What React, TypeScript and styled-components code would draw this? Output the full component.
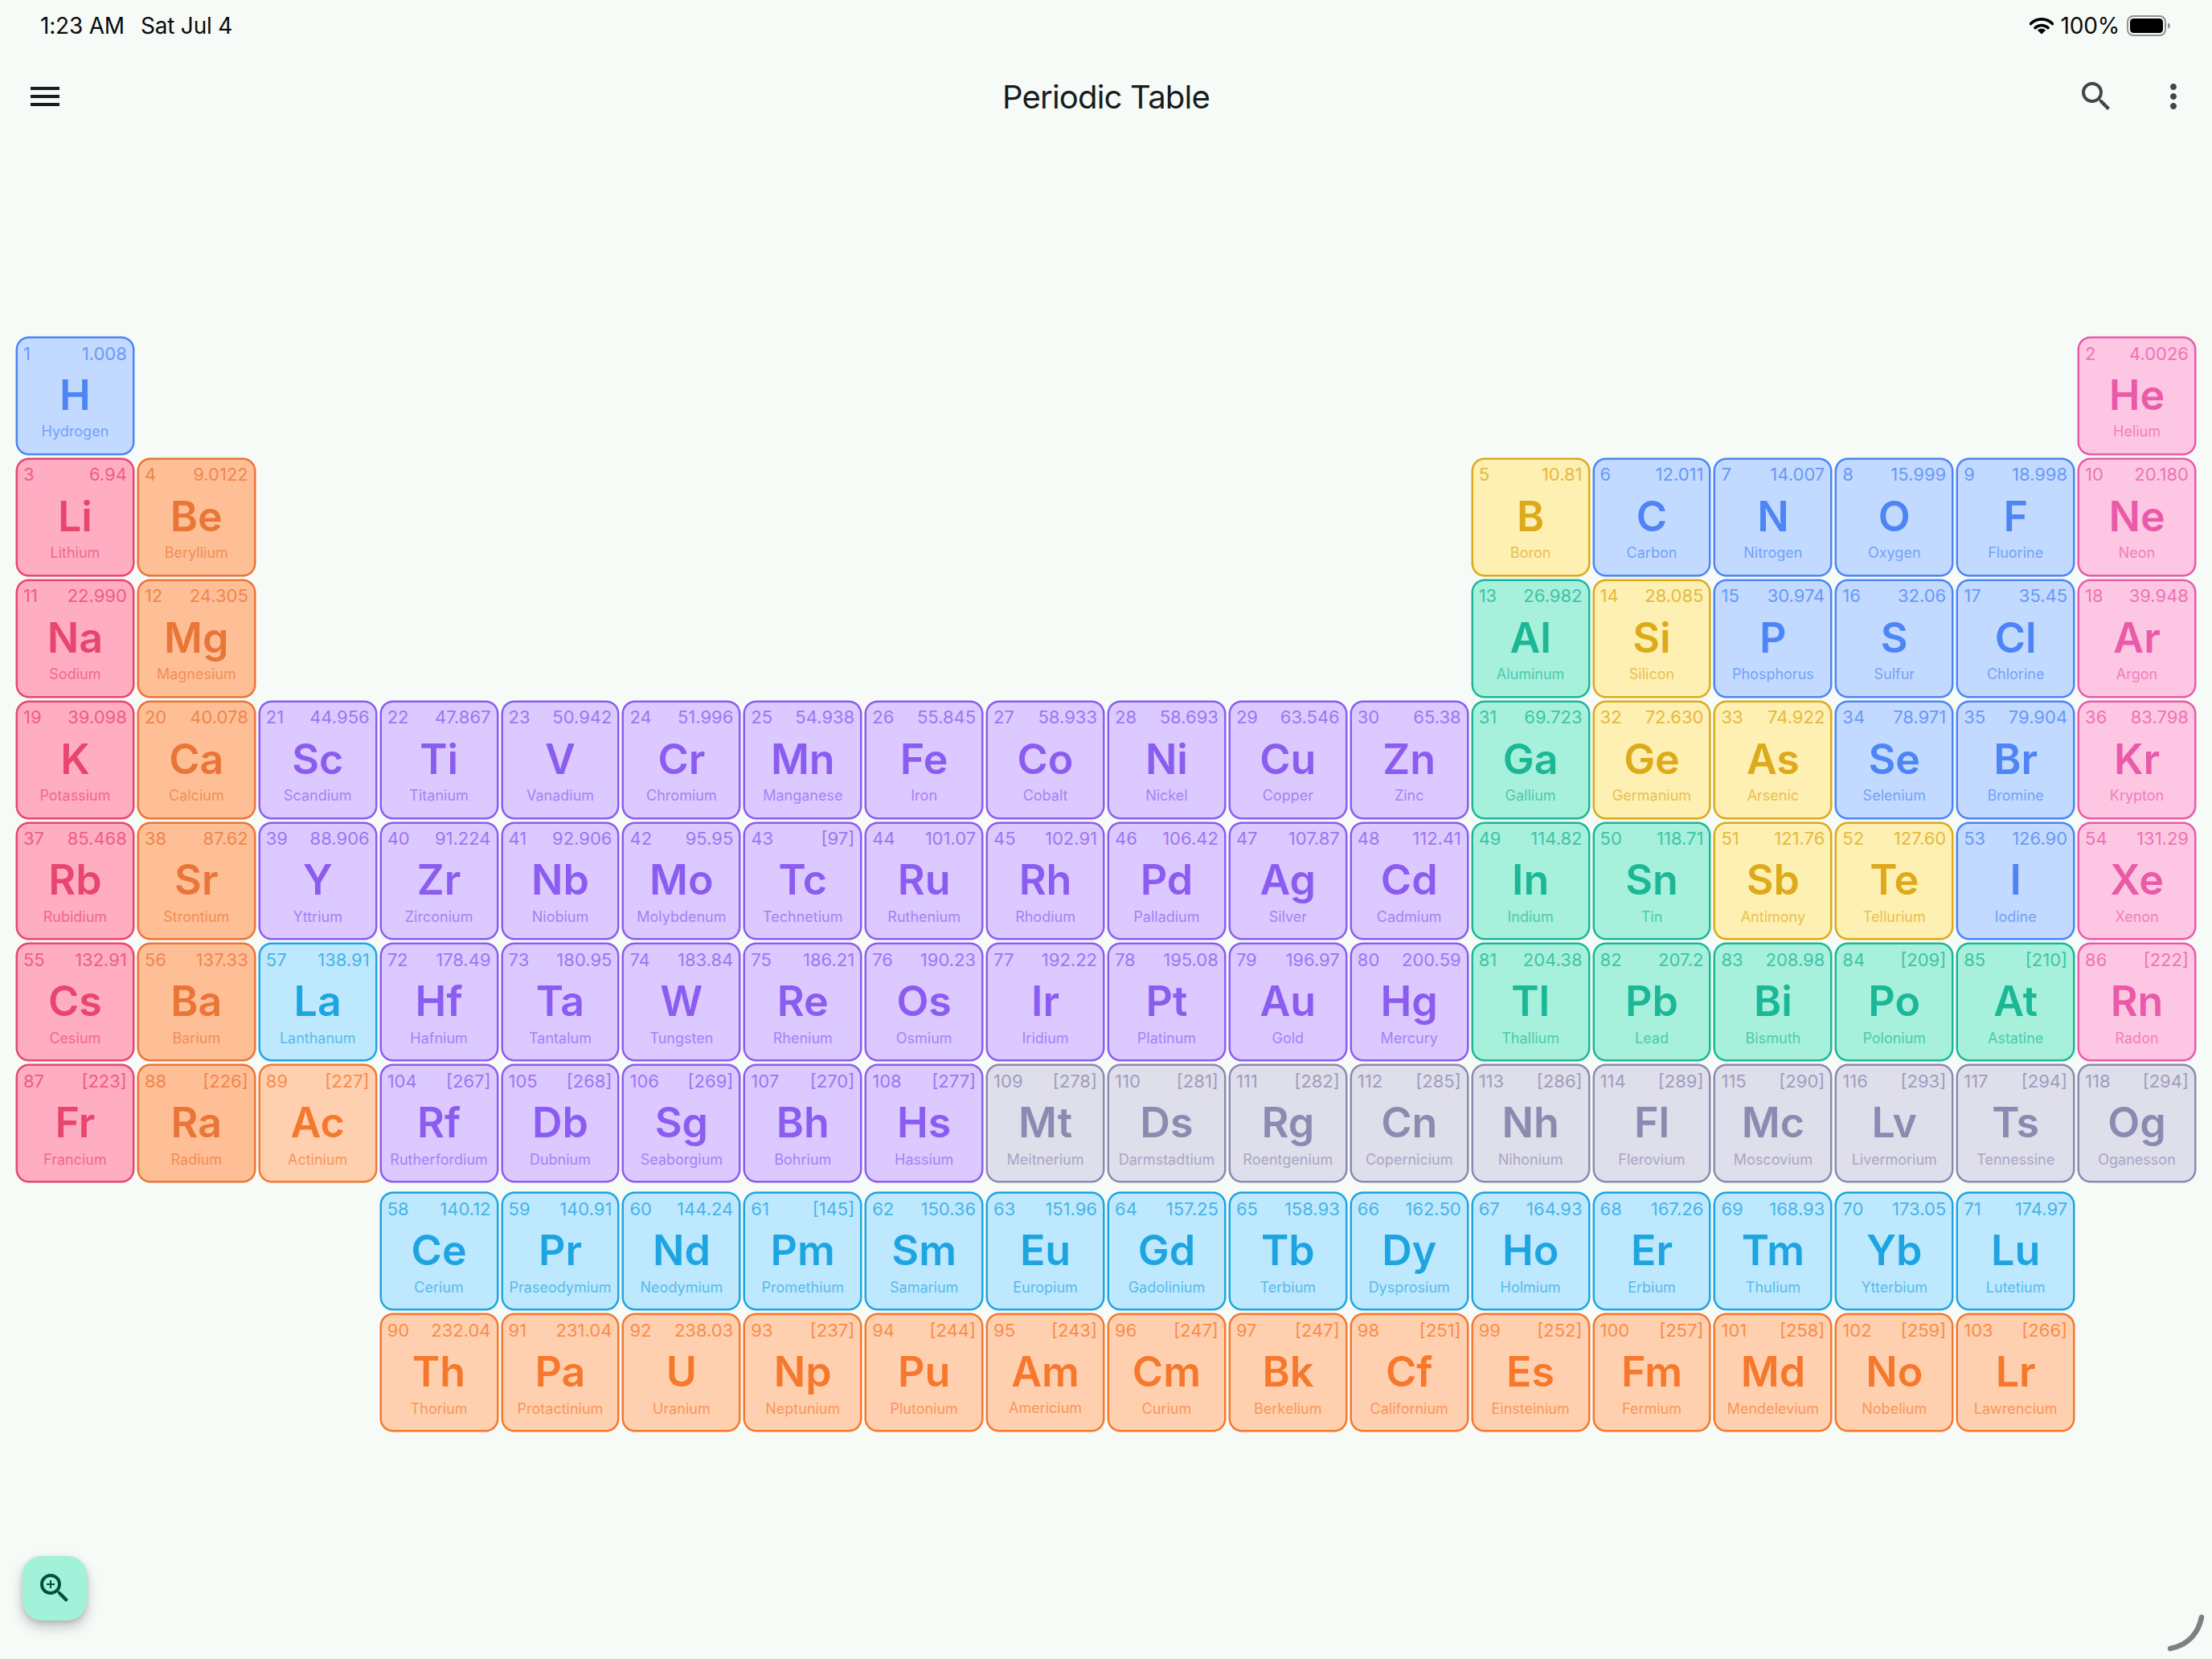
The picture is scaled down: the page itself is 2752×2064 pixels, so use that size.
import styled, { createGlobalStyle } from 'styled-components'
import { MdMenu, MdMoreVert, MdSearch, MdZoomIn } from 'react-icons/md'

type Category = 'alkali' | 'alkaline' | 'transition' | 'post' | 'metalloid' | 'nonmetal' | 'noble' | 'lanthanide' | 'actinide' | 'unknown'

const palette: Record<Category, { fill: string; ink: string }> = {
  alkali: { fill: '#ffadc3', ink: '232, 70, 110' },
  alkaline: { fill: '#ffbf96', ink: '233, 117, 56' },
  transition: { fill: '#dcc9ff', ink: '139, 92, 240' },
  post: { fill: '#a7f0db', ink: '28, 183, 150' },
  metalloid: { fill: '#feefb2', ink: '220, 170, 26' },
  nonmetal: { fill: '#c2daff', ink: '77, 133, 245' },
  noble: { fill: '#fdc7e3', ink: '233, 90, 168' },
  lanthanide: { fill: '#bee8fe', ink: '30, 165, 225' },
  actinide: { fill: '#ffd0b0', ink: '245, 120, 45' },
  unknown: { fill: '#dfdeeb', ink: '140, 138, 176' },
}

type El = [number, string, string, string, Category]

const mainRows: (El | number)[][] = [
  [[1, 'H', 'Hydrogen', '1.008', 'nonmetal'], 16, [2, 'He', 'Helium', '4.0026', 'noble']],
  [
    [3, 'Li', 'Lithium', '6.94', 'alkali'],
    [4, 'Be', 'Beryllium', '9.0122', 'alkaline'],
    10,
    [5, 'B', 'Boron', '10.81', 'metalloid'],
    [6, 'C', 'Carbon', '12.011', 'nonmetal'],
    [7, 'N', 'Nitrogen', '14.007', 'nonmetal'],
    [8, 'O', 'Oxygen', '15.999', 'nonmetal'],
    [9, 'F', 'Fluorine', '18.998', 'nonmetal'],
    [10, 'Ne', 'Neon', '20.180', 'noble'],
  ],
  [
    [11, 'Na', 'Sodium', '22.990', 'alkali'],
    [12, 'Mg', 'Magnesium', '24.305', 'alkaline'],
    10,
    [13, 'Al', 'Aluminum', '26.982', 'post'],
    [14, 'Si', 'Silicon', '28.085', 'metalloid'],
    [15, 'P', 'Phosphorus', '30.974', 'nonmetal'],
    [16, 'S', 'Sulfur', '32.06', 'nonmetal'],
    [17, 'Cl', 'Chlorine', '35.45', 'nonmetal'],
    [18, 'Ar', 'Argon', '39.948', 'noble'],
  ],
  [
    [19, 'K', 'Potassium', '39.098', 'alkali'],
    [20, 'Ca', 'Calcium', '40.078', 'alkaline'],
    [21, 'Sc', 'Scandium', '44.956', 'transition'],
    [22, 'Ti', 'Titanium', '47.867', 'transition'],
    [23, 'V', 'Vanadium', '50.942', 'transition'],
    [24, 'Cr', 'Chromium', '51.996', 'transition'],
    [25, 'Mn', 'Manganese', '54.938', 'transition'],
    [26, 'Fe', 'Iron', '55.845', 'transition'],
    [27, 'Co', 'Cobalt', '58.933', 'transition'],
    [28, 'Ni', 'Nickel', '58.693', 'transition'],
    [29, 'Cu', 'Copper', '63.546', 'transition'],
    [30, 'Zn', 'Zinc', '65.38', 'transition'],
    [31, 'Ga', 'Gallium', '69.723', 'post'],
    [32, 'Ge', 'Germanium', '72.630', 'metalloid'],
    [33, 'As', 'Arsenic', '74.922', 'metalloid'],
    [34, 'Se', 'Selenium', '78.971', 'nonmetal'],
    [35, 'Br', 'Bromine', '79.904', 'nonmetal'],
    [36, 'Kr', 'Krypton', '83.798', 'noble'],
  ],
  [
    [37, 'Rb', 'Rubidium', '85.468', 'alkali'],
    [38, 'Sr', 'Strontium', '87.62', 'alkaline'],
    [39, 'Y', 'Yttrium', '88.906', 'transition'],
    [40, 'Zr', 'Zirconium', '91.224', 'transition'],
    [41, 'Nb', 'Niobium', '92.906', 'transition'],
    [42, 'Mo', 'Molybdenum', '95.95', 'transition'],
    [43, 'Tc', 'Technetium', '[97]', 'transition'],
    [44, 'Ru', 'Ruthenium', '101.07', 'transition'],
    [45, 'Rh', 'Rhodium', '102.91', 'transition'],
    [46, 'Pd', 'Palladium', '106.42', 'transition'],
    [47, 'Ag', 'Silver', '107.87', 'transition'],
    [48, 'Cd', 'Cadmium', '112.41', 'transition'],
    [49, 'In', 'Indium', '114.82', 'post'],
    [50, 'Sn', 'Tin', '118.71', 'post'],
    [51, 'Sb', 'Antimony', '121.76', 'metalloid'],
    [52, 'Te', 'Tellurium', '127.60', 'metalloid'],
    [53, 'I', 'Iodine', '126.90', 'nonmetal'],
    [54, 'Xe', 'Xenon', '131.29', 'noble'],
  ],
  [
    [55, 'Cs', 'Cesium', '132.91', 'alkali'],
    [56, 'Ba', 'Barium', '137.33', 'alkaline'],
    [57, 'La', 'Lanthanum', '138.91', 'lanthanide'],
    [72, 'Hf', 'Hafnium', '178.49', 'transition'],
    [73, 'Ta', 'Tantalum', '180.95', 'transition'],
    [74, 'W', 'Tungsten', '183.84', 'transition'],
    [75, 'Re', 'Rhenium', '186.21', 'transition'],
    [76, 'Os', 'Osmium', '190.23', 'transition'],
    [77, 'Ir', 'Iridium', '192.22', 'transition'],
    [78, 'Pt', 'Platinum', '195.08', 'transition'],
    [79, 'Au', 'Gold', '196.97', 'transition'],
    [80, 'Hg', 'Mercury', '200.59', 'transition'],
    [81, 'Tl', 'Thallium', '204.38', 'post'],
    [82, 'Pb', 'Lead', '207.2', 'post'],
    [83, 'Bi', 'Bismuth', '208.98', 'post'],
    [84, 'Po', 'Polonium', '[209]', 'post'],
    [85, 'At', 'Astatine', '[210]', 'post'],
    [86, 'Rn', 'Radon', '[222]', 'noble'],
  ],
  [
    [87, 'Fr', 'Francium', '[223]', 'alkali'],
    [88, 'Ra', 'Radium', '[226]', 'alkaline'],
    [89, 'Ac', 'Actinium', '[227]', 'actinide'],
    [104, 'Rf', 'Rutherfordium', '[267]', 'transition'],
    [105, 'Db', 'Dubnium', '[268]', 'transition'],
    [106, 'Sg', 'Seaborgium', '[269]', 'transition'],
    [107, 'Bh', 'Bohrium', '[270]', 'transition'],
    [108, 'Hs', 'Hassium', '[277]', 'transition'],
    [109, 'Mt', 'Meitnerium', '[278]', 'unknown'],
    [110, 'Ds', 'Darmstadtium', '[281]', 'unknown'],
    [111, 'Rg', 'Roentgenium', '[282]', 'unknown'],
    [112, 'Cn', 'Copernicium', '[285]', 'unknown'],
    [113, 'Nh', 'Nihonium', '[286]', 'unknown'],
    [114, 'Fl', 'Flerovium', '[289]', 'unknown'],
    [115, 'Mc', 'Moscovium', '[290]', 'unknown'],
    [116, 'Lv', 'Livermorium', '[293]', 'unknown'],
    [117, 'Ts', 'Tennessine', '[294]', 'unknown'],
    [118, 'Og', 'Oganesson', '[294]', 'unknown'],
  ],
]

const seriesRows: (El | number)[][] = [
  [
    3,
    [58, 'Ce', 'Cerium', '140.12', 'lanthanide'],
    [59, 'Pr', 'Praseodymium', '140.91', 'lanthanide'],
    [60, 'Nd', 'Neodymium', '144.24', 'lanthanide'],
    [61, 'Pm', 'Promethium', '[145]', 'lanthanide'],
    [62, 'Sm', 'Samarium', '150.36', 'lanthanide'],
    [63, 'Eu', 'Europium', '151.96', 'lanthanide'],
    [64, 'Gd', 'Gadolinium', '157.25', 'lanthanide'],
    [65, 'Tb', 'Terbium', '158.93', 'lanthanide'],
    [66, 'Dy', 'Dysprosium', '162.50', 'lanthanide'],
    [67, 'Ho', 'Holmium', '164.93', 'lanthanide'],
    [68, 'Er', 'Erbium', '167.26', 'lanthanide'],
    [69, 'Tm', 'Thulium', '168.93', 'lanthanide'],
    [70, 'Yb', 'Ytterbium', '173.05', 'lanthanide'],
    [71, 'Lu', 'Lutetium', '174.97', 'lanthanide'],
  ],
  [
    3,
    [90, 'Th', 'Thorium', '232.04', 'actinide'],
    [91, 'Pa', 'Protactinium', '231.04', 'actinide'],
    [92, 'U', 'Uranium', '238.03', 'actinide'],
    [93, 'Np', 'Neptunium', '[237]', 'actinide'],
    [94, 'Pu', 'Plutonium', '[244]', 'actinide'],
    [95, 'Am', 'Americium', '[243]', 'actinide'],
    [96, 'Cm', 'Curium', '[247]', 'actinide'],
    [97, 'Bk', 'Berkelium', '[247]', 'actinide'],
    [98, 'Cf', 'Californium', '[251]', 'actinide'],
    [99, 'Es', 'Einsteinium', '[252]', 'actinide'],
    [100, 'Fm', 'Fermium', '[257]', 'actinide'],
    [101, 'Md', 'Mendelevium', '[258]', 'actinide'],
    [102, 'No', 'Nobelium', '[259]', 'actinide'],
    [103, 'Lr', 'Lawrencium', '[266]', 'actinide'],
  ],
]

const GlobalStyle = createGlobalStyle`
  html, body {
    margin: 0;
    background: #f6fbf8;
  }
  body {
    font-family: Inter, "Liberation Sans", sans-serif;
    overflow: hidden;
  }
`

const Page = styled.div`
  position: relative;
  width: 2752px;
  height: 2064px;
  background: #f6fbf8;
`

const StatusBar = styled.div`
  height: 64px;
  padding: 0 52px 0 50px;
  box-sizing: border-box;
  display: flex;
  align-items: center;
  justify-content: space-between;
  color: #0a0a0a;
  font-size: 28px;
  letter-spacing: -0.2px;
`

const StatusGroup = styled.div`
  display: flex;
  align-items: center;
  gap: 9px;
`

const StatusDate = styled.span`
  margin-left: 11px;
`

const Toolbar = styled.header`
  height: 112px;
  padding: 0 24px 0 32px;
  box-sizing: border-box;
  display: flex;
  align-items: center;
`

const ToolIcon = styled.span<{ $color: string; $gap?: number }>`
  display: flex;
  margin-left: ${(p) => p.$gap ?? 0}px;
  color: ${(p) => p.$color};
`

const Title = styled.h1`
  flex: 1;
  margin: 0;
  padding-left: 88px;
  text-align: center;
  font-size: 40px;
  font-weight: 400;
  letter-spacing: -0.8px;
  color: #171d1b;
`

const Tables = styled.main`
  padding: 243px 20px 0;
`

const Table = styled.div`
  display: grid;
  grid-template-columns: repeat(18, 1fr);
  gap: 4px;
`

const Series = styled(Table)`
  margin-top: 12px;
`

const Cell = styled.div<{ $fill: string; $ink: string; $col: number }>`
  grid-column: ${(p) => p.$col};
  aspect-ratio: 1;
  box-sizing: border-box;
  padding: 3.5px 7px 14.5px;
  display: flex;
  flex-direction: column;
  background: ${(p) => p.$fill};
  border: 2px solid rgb(${(p) => p.$ink});
  box-shadow: 0 0 0 0.5px rgb(${(p) => p.$ink});
  border-radius: 16px;
  color: rgb(${(p) => p.$ink});
  min-width: 0;
`

const CellTop = styled.div`
  display: flex;
  justify-content: space-between;
  font-size: 22px;
  line-height: 30px;
  opacity: 0.76;
`

const Symbol = styled.div`
  flex: 1;
  padding-top: 4px;
  display: flex;
  align-items: center;
  justify-content: center;
  font-size: 52px;
  font-weight: 600;
  line-height: 1;
`

const Name = styled.div`
  font-size: 18px;
  line-height: 24px;
  text-align: center;
  white-space: nowrap;
  opacity: 0.66;
`

const Fab = styled.button`
  position: absolute;
  left: 28px;
  top: 1936px;
  width: 80px;
  height: 80px;
  padding: 0;
  display: flex;
  align-items: center;
  justify-content: center;
  border: 0;
  border-radius: 24px;
  background: #a2f2da;
  color: #00513f;
  box-shadow: 0 8px 16px rgba(0, 0, 0, 0.22), 0 2px 6px rgba(0, 0, 0, 0.12);
`

const ScrollArc = styled.svg`
  position: absolute;
  left: 2690px;
  top: 2000px;
`

function WifiIcon() {
  return (
    <svg width="30" height="22" viewBox="0 0 30 22">
      <path d="M1.5 8.5C9 1 21 1 28.5 8.5" fill="none" stroke="#000" strokeWidth="3.6" strokeLinecap="round" />
      <path d="M7 13.6C11.5 9.4 18.5 9.4 23 13.6" fill="none" stroke="#000" strokeWidth="3.6" strokeLinecap="round" />
      <path d="M15 21.5L9.8 16.6C12.6 14.2 17.4 14.2 20.2 16.6Z" fill="#000" />
    </svg>
  )
}

function BatteryIcon() {
  return (
    <svg width="54" height="26" viewBox="0 0 54 26">
      <rect x="1" y="1" width="47" height="24" rx="7" fill="none" stroke="#8f948f" strokeWidth="2" />
      <rect x="4" y="4" width="41" height="18" rx="4.5" fill="#000" />
      <path d="M51 9.5C53 10.2 54 11.4 54 13C54 14.6 53 15.8 51 16.5Z" fill="#8f948f" />
    </svg>
  )
}

function ElementCell({ el, col }: { el: El; col: number }) {
  const [num, symbol, name, mass, category] = el
  const colors = palette[category]
  return (
    <Cell $fill={colors.fill} $ink={colors.ink} $col={col}>
      <CellTop>
        <span>{num}</span>
        <span>{mass}</span>
      </CellTop>
      <Symbol>{symbol}</Symbol>
      <Name>{name}</Name>
    </Cell>
  )
}

// a number in a row is a run of empty columns
function renderRows(rows: (El | number)[][]) {
  return rows.flatMap((row) => {
    let col = 1
    return row.flatMap((item) => {
      if (typeof item === 'number') {
        col += item
        return []
      }
      const cell = <ElementCell key={item[0]} el={item} col={col} />
      col += 1
      return [cell]
    })
  })
}

export default function App() {
  return (
    <Page>
      <GlobalStyle />
      <StatusBar>
        <StatusGroup>
          <span>1:23 AM</span>
          <StatusDate>Sat Jul 4</StatusDate>
        </StatusGroup>
        <StatusGroup>
          <WifiIcon />
          <span>100%</span>
          <BatteryIcon />
        </StatusGroup>
      </StatusBar>
      <Toolbar>
        <ToolIcon $color="#171d1b">
          <MdMenu size={48} />
        </ToolIcon>
        <Title>Periodic Table</Title>
        <ToolIcon $color="#3f4946">
          <MdSearch size={48} />
        </ToolIcon>
        <ToolIcon $color="#3f4946" $gap={48}>
          <MdMoreVert size={48} />
        </ToolIcon>
      </Toolbar>
      <Tables>
        <Table>{renderRows(mainRows)}</Table>
        <Series>{renderRows(seriesRows)}</Series>
      </Tables>
      <Fab>
        <MdZoomIn size={48} />
      </Fab>
      <ScrollArc width="60" height="60" viewBox="0 0 60 60">
        <path d="M49 12C45 32 32 47 10 51" fill="none" stroke="#808080" strokeWidth="6.5" strokeLinecap="round" />
      </ScrollArc>
    </Page>
  )
}
